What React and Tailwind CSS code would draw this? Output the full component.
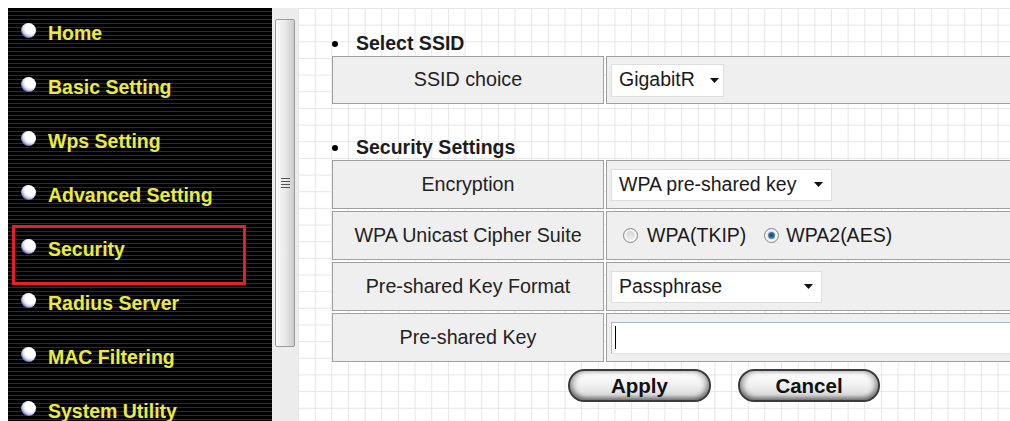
import React from "react";

const menu = [
  "Home",
  "Basic Setting",
  "Wps Setting",
  "Advanced Setting",
  "Security",
  "Radius Server",
  "MAC Filtering",
  "System Utility",
];

function Bullet() {
  return (
    <span className="mb-[8px] h-[15px] w-[15px] shrink-0 rounded-full bg-[radial-gradient(circle_at_64%_34%,#ffffff_0%,#ffffff_40%,#d0d0ec_58%,#4a4ab8_78%,#1a1a60_100%)]" />
  );
}

function Sidebar() {
  return (
    <aside className="relative h-full w-[264px] shrink-0 overflow-hidden bg-[repeating-linear-gradient(to_bottom,#000000_0px,#000000_3px,#2c2c2c_3px,#2c2c2c_4px)]">
      <ul className="-mt-px">
        {menu.map((item) => (
          <li
            key={item}
            className="flex h-[54px] items-center gap-[12px] pl-[13px] text-[19.5px] font-bold text-[#ebeb3d]"
          >
            <Bullet />
            <span>{item}</span>
          </li>
        ))}
      </ul>
      {/* highlight frame around the current page */}
      <div className="pointer-events-none absolute left-[4px] top-[217px] h-[60px] w-[234px] border-[3px] border-[#e0202c]" />
    </aside>
  );
}

function ScrollGutter() {
  return (
    <div className="flex h-full w-[26px] shrink-0 flex-col bg-[#ececec] px-[3px] pt-[11px]">
      <div className="flex h-[328px] items-center justify-center rounded-[2px] border border-[#9a9a9a] bg-[linear-gradient(to_right,#f8f8f8,#e8e8e8_55%,#cccccc)]">
        <div className="flex flex-col gap-[2px]">
          <span className="h-px w-[9px] bg-[#555]" />
          <span className="h-px w-[9px] bg-[#555]" />
          <span className="h-px w-[9px] bg-[#555]" />
          <span className="h-px w-[9px] bg-[#555]" />
        </div>
      </div>
    </div>
  );
}

function Heading({ children }) {
  return (
    <div className="flex h-[24px] items-center gap-[18px] text-[19.5px] font-bold text-[#1c1c1c]">
      <span className="h-[6px] w-[6px] rounded-full bg-black" />
      {children}
    </div>
  );
}

function Row({ label, height, children }) {
  return (
    <div className={`flex gap-[2px] ${height}`}>
      <div className="flex w-[272px] shrink-0 items-center justify-center border border-[#a0a0a0] bg-[#efefef] text-[19.7px] text-[#222]">
        {label}
      </div>
      <div className="flex flex-1 items-center border border-[#a0a0a0] bg-[#efefef] pl-[4px]">
        {children}
      </div>
    </div>
  );
}

function Arrow() {
  return (
    <svg width="9" height="5" viewBox="0 0 9 5" className="shrink-0">
      <path d="M0 0h9L4.5 5z" fill="#111" />
    </svg>
  );
}

function Select({ value, size }) {
  return (
    <div
      className={`flex items-center justify-between border border-[#dedede] bg-white pl-[7px] text-[19.5px] text-[#1a1a1a] ${size}`}
    >
      <span>{value}</span>
      <Arrow />
    </div>
  );
}

function Radio({ checked }) {
  return (
    <span className="flex h-[15px] w-[15px] shrink-0 items-center justify-center rounded-full border border-[#888] bg-[linear-gradient(to_bottom,#cfcfcf,#f4f4f4)] shadow-[inset_0_0_0_2px_#f6f6f6]">
      {checked && (
        <span className="h-[7px] w-[7px] rounded-full bg-[radial-gradient(circle_at_50%_45%,#0f3c66_0%,#2d6fa6_45%,#7fb6de_100%)]" />
      )}
    </span>
  );
}

function PillButton({ children, width }) {
  return (
    <button
      type="button"
      className={`h-[33px] rounded-full border-2 border-[#3a3a3a] bg-[linear-gradient(to_bottom,#ffffff,#f2f2f2_45%,#d2d2d2)] text-[20.5px] font-bold text-[#111] shadow-[inset_0_-3px_4px_rgba(0,0,0,0.3),inset_4px_0_5px_rgba(0,0,0,0.25),inset_-4px_0_5px_rgba(0,0,0,0.25)] ${width}`}
    >
      {children}
    </button>
  );
}

export default function App() {
  return (
    <div className="flex h-[421px] w-[1010px] overflow-hidden bg-white pl-[8px] pt-[8px] font-['Liberation_Sans',Arial,sans-serif]">
      <Sidebar />
      <ScrollGutter />

      <main className="h-full flex-1 overflow-hidden bg-white bg-[linear-gradient(to_right,#e6e6e6_1px,transparent_1px),linear-gradient(to_bottom,#e6e6e6_1px,transparent_1px)] bg-[size:16.67px_16.67px] pl-[34px] pt-[24px]">
        <Heading>Select SSID</Heading>
        <div className="w-[760px]">
          <Row label="SSID choice" height="h-[48px]">
            <Select value="GigabitR" size="h-[33px] w-[113px] pr-[4px]" />
          </Row>
        </div>

        <div className="mt-[32px]">
          <Heading>Security Settings</Heading>
        </div>
        <div className="flex w-[760px] flex-col gap-[2px]">
          <Row label="Encryption" height="h-[49px]">
            <Select value="WPA pre-shared key" size="h-[32px] w-[221px] pr-[8px]" />
          </Row>
          <Row label="WPA Unicast Cipher Suite" height="h-[49px]">
            <div className="flex items-center pl-[12px] text-[19.5px] text-[#1a1a1a]">
              <Radio />
              <span className="ml-[9px]">WPA(TKIP)</span>
              <span className="ml-[18px]">
                <Radio checked />
              </span>
              <span className="ml-[7px]">WPA2(AES)</span>
            </div>
          </Row>
          <Row label="Pre-shared Key Format" height="h-[49px]">
            <Select value="Passphrase" size="h-[32px] w-[211px] pr-[8px]" />
          </Row>
          <Row label="Pre-shared Key" height="h-[49px]">
            <div className="flex h-[32px] flex-1 items-center border border-[#a9b9cc] border-b-[#dde4ec] bg-white pl-[3px]">
              <span className="h-[23px] w-px bg-black" />
            </div>
          </Row>
        </div>

        <div className="mt-[7px] flex gap-[27px] pl-[236px]">
          <PillButton width="w-[143px]">Apply</PillButton>
          <PillButton width="w-[142px]">Cancel</PillButton>
        </div>
      </main>
    </div>
  );
}
